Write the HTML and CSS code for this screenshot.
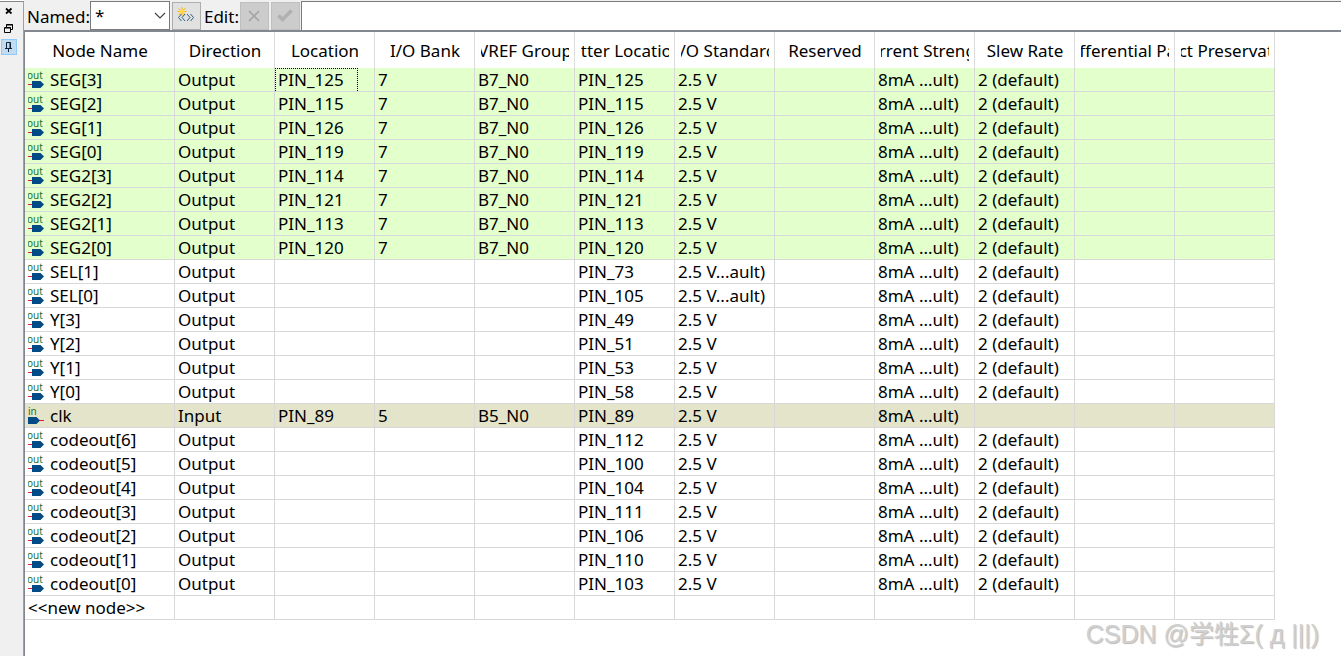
FILE: index.html
```
<!DOCTYPE html>
<html lang="en">
  <head>
    <meta charset="UTF-8" />
    <meta name="viewport" content="width=device-width, initial-scale=1.0" />
    <title>Pin Planner</title>
    <link rel="stylesheet" href="styles.css">
  </head>
  <body>
    <div class="side">
      <button type="button" class="dock" aria-label="Close">
        <svg width="8" height="8" viewBox="0 0 8 8"><path d="M1 1.500 6.500 6.500M6.500 1.500 1 6.500" stroke="#000" stroke-width="1.700" /></svg>
      </button>
      <button type="button" class="dock" aria-label="Float">
        <svg width="10" height="10" viewBox="0 0 10 10" fill="none" stroke="#000"><path d="M2.500 4V.5h6v5H6.500M2 1h7M1 4h6" /><path d="M.5 3.500h6v5h-6z" /></svg>
      </button>
      <button type="button" class="dock pinned" aria-label="Pin">
        <svg width="8" height="10" viewBox="0 0 8 10" fill="none" stroke="#123"><path d="M1.500 6V.5h4V6M5 .5V6M0 6.500h7M3.500 7v3" /></svg>
      </button>
    </div>

    <div class="main">
      <div class="toolbar">
        <label for="named">Named:</label>
        <span class="combo">
          <select id="named">
            <option>*</option>
          </select>
          <svg width="12" height="7" viewBox="0 0 12 7"><path d="M1 1l5 5 5-5" fill="none" stroke="#444" stroke-width="1.200" /></svg>
        </span>
        <button type="button" class="tool" aria-label="Node finder">
          <svg width="18" height="18" viewBox="0 0 18 18" fill="none">
            <path d="M5 0v9M.5 4.500h9M1.500 1.500l7 6.500M8.500 1l-7 7" stroke="#f8b800" />
            <circle cx="5" cy="4.500" r="2.300" fill="#ffd84a" />
            <path d="M4.500 7 1.500 10.500l3 3.500M8 7 5 10.500 8 14M10 7l3 3.500-3 3.500M13.500 7l3 3.500-3 3.500" stroke="#2f5f80" />
          </svg>
        </button>
        <label for="edit">Edit:</label>
        <button type="button" class="tool" aria-label="Cancel" disabled>
          <svg width="12" height="12" viewBox="0 0 12 12"><path d="M1 1l10 10M11 1 1 11" stroke="#a0a0a0" stroke-width="1.500" /></svg>
        </button>
        <button type="button" class="tool" aria-label="Apply" disabled>
          <svg width="16" height="13" viewBox="0 0 16 13"><path d="M1.500 6.500l4 4L14.500 1.500" fill="none" stroke="#b0b0b0" stroke-width="3.500" /></svg>
        </button>
        <input type="text" id="edit" class="edit" />
      </div>

      <div class="view">
        <table>
          <thead>
            <tr>
              <th class="name"><span>Node Name</span></th>
              <th><span>Direction</span></th>
              <th><span>Location</span></th>
              <th><span>I/O Bank</span></th>
              <th><span>VREF Group</span></th>
              <th><span>Fitter Location</span></th>
              <th><span>I/O Standard</span></th>
              <th><span>Reserved</span></th>
              <th><span>Current Strength</span></th>
              <th><span>Slew Rate</span></th>
              <th><span>Differential Pair</span></th>
              <th><span>Strict Preservation</span></th>
            </tr>
          </thead>
          <tbody id="nodes"></tbody>
        </table>
      </div>
    </div>

    <div class="watermark">CSDN @学牲Σ( д |||)</div>

    <script src="script.js"></script>
  </body>
</html>
```
FILE: styles.css
```
* {
  box-sizing: border-box;
  margin: 0;
  padding: 0;
}

body {
  display: flex;
  min-height: 100vh;
  background-color: #fff;
  color: #000;
  font: 17px/24px "Noto Sans", "Noto Sans CJK SC", sans-serif;
}

button,
input,
select {
  font: inherit;
  color: inherit;
}

.side {
  flex: none;
  display: flex;
  flex-direction: column;
  align-items: flex-start;
  gap: 2px;
  width: 24px;
  margin-top: 1px;
  padding: 1px;
  border-top: 1px solid #888;
  border-right: 1px solid #a0a0a0;
  background-color: #f0f0f0;
}

.dock {
  display: flex;
  align-items: center;
  justify-content: center;
  width: 16px;
  height: 16px;
  border: 0;
  background: none;
}

.pinned {
  border: 1px solid #90c8f6;
  background-color: #c0dcf3;
}

.main {
  flex: 1;
  display: flex;
  flex-direction: column;
  min-width: 0;
}

.toolbar {
  display: flex;
  align-items: center;
  gap: 2px;
  height: 30px;
  padding: 1px 0 0 3px;
  background-color: #f0f0f0;
}

.toolbar label {
  margin-right: -2px;
  padding-top: 3px;
}

.tool + label {
  margin: 0 -1px 0 1px;
}

.combo {
  display: flex;
  align-items: center;
  width: 80px;
  height: 29px;
  padding-right: 3px;
  border: 1px solid #7a7a7a;
  background-color: #fff;
}

.combo select {
  flex: 1;
  min-width: 0;
  padding-left: 4px;
  border: 0;
  background: none;
  appearance: none;
}

.tool {
  display: flex;
  align-items: center;
  justify-content: center;
  width: 29px;
  height: 28px;
  border: 1px solid #adadad;
  background-color: #e1e1e1;
}

.tool:disabled {
  border-color: #bfbfbf;
  background-color: #ccc;
}

.edit {
  flex: 1;
  min-width: 0;
  height: 29px;
  margin-left: -1px;
  padding: 0 4px;
  border: 1px solid #7a7a7a;
  border-width: 1px 0 0 1px;
  background-color: #fff;
}

.view {
  flex: 1;
  border-top: 2px solid #828790;
  border-left: 1px solid #828790;
}

table {
  width: 1250px;
  table-layout: fixed;
  border-collapse: separate;
  border-spacing: 0;
}

th {
  width: 100px;
  height: 36px;
  padding: 2px 5px 0 6px;
  border-right: 1px solid #dcdcdc;
  font-weight: normal;
}

.name {
  width: 150px;
}

/* long titles are clipped on both sides */
th span {
  display: flex;
  justify-content: center;
  overflow: hidden;
  white-space: nowrap;
}

td {
  height: 24px;
  padding: 1px 3px 0;
  border-right: 1px solid #d8d8d8;
  border-bottom: 1px solid #d8d8d8;
  line-height: 22px;
  white-space: nowrap;
}

.assigned {
  background-color: #e3ffcb;
}

.input {
  background-color: #e4e4cb;
}

.node {
  display: flex;
  align-items: center;
  gap: 6px;
}

td.current {
  padding: 0;
}

.current span {
  display: block;
  width: 83px;
  height: 23px;
  padding-left: 2px;
  border: 1px dotted #000;
  border-bottom: 0;
}

.pin text {
  font: 10px "Noto Sans", sans-serif;
  fill: #1f6f2a;
}

.watermark {
  position: absolute;
  right: 22px;
  bottom: 6px;
  color: #d0d0d0;
  font: 25px/32px "Liberation Sans", "Noto Sans CJK SC", sans-serif;
  text-shadow: 1px 1px 1px #bbb;
}
```
FILE: script.js
```
// name, direction, location, bank, vref, fitter location, standard
const nodes = [
  ["SEG[3]", "Output", "PIN_125", "7", "B7_N0", "PIN_125", "2.5 V"],
  ["SEG[2]", "Output", "PIN_115", "7", "B7_N0", "PIN_115", "2.5 V"],
  ["SEG[1]", "Output", "PIN_126", "7", "B7_N0", "PIN_126", "2.5 V"],
  ["SEG[0]", "Output", "PIN_119", "7", "B7_N0", "PIN_119", "2.5 V"],
  ["SEG2[3]", "Output", "PIN_114", "7", "B7_N0", "PIN_114", "2.5 V"],
  ["SEG2[2]", "Output", "PIN_121", "7", "B7_N0", "PIN_121", "2.5 V"],
  ["SEG2[1]", "Output", "PIN_113", "7", "B7_N0", "PIN_113", "2.5 V"],
  ["SEG2[0]", "Output", "PIN_120", "7", "B7_N0", "PIN_120", "2.5 V"],
  ["SEL[1]", "Output", "", "", "", "PIN_73", "2.5 V...ault)"],
  ["SEL[0]", "Output", "", "", "", "PIN_105", "2.5 V...ault)"],
  ["Y[3]", "Output", "", "", "", "PIN_49", "2.5 V"],
  ["Y[2]", "Output", "", "", "", "PIN_51", "2.5 V"],
  ["Y[1]", "Output", "", "", "", "PIN_53", "2.5 V"],
  ["Y[0]", "Output", "", "", "", "PIN_58", "2.5 V"],
  ["clk", "Input", "PIN_89", "5", "B5_N0", "PIN_89", "2.5 V"],
  ["codeout[6]", "Output", "", "", "", "PIN_112", "2.5 V"],
  ["codeout[5]", "Output", "", "", "", "PIN_100", "2.5 V"],
  ["codeout[4]", "Output", "", "", "", "PIN_104", "2.5 V"],
  ["codeout[3]", "Output", "", "", "", "PIN_111", "2.5 V"],
  ["codeout[2]", "Output", "", "", "", "PIN_106", "2.5 V"],
  ["codeout[1]", "Output", "", "", "", "PIN_110", "2.5 V"],
  ["codeout[0]", "Output", "", "", "", "PIN_103", "2.5 V"],
];

const outIcon = `<svg class="pin" width="16" height="18" viewBox="0 0 16 18"><text x="-1" y="8">out</text><path d="M0 13.500h4" stroke="#e02030"/><path d="M4 10h8.500L16 13.500 12.500 17H4z" fill="#004a86"/></svg>`;
const inIcon = `<svg class="pin" width="16" height="18" viewBox="0 0 16 18"><text x="0" y="8">in</text><path d="M11 13.500h5" stroke="#e02030"/><path d="M0 10h8.500L12 13.500 8.500 17H0z" fill="#004a86"/></svg>`;

const body = document.querySelector("#nodes");

nodes.forEach((node, i) => {
  const isInput = node[1] === "Input";
  const cells = [...node, "", "8mA ...ult)", isInput ? "" : "2 (default)", "", ""];
  const tr = document.createElement("tr");

  if (isInput) {
    tr.className = "input";
  } else if (node[2]) {
    tr.className = "assigned";
  }

  tr.innerHTML = cells
    .map((text, col) => {
      if (col === 0) {
        return `<td><div class="node">${isInput ? inIcon : outIcon}${text}</div></td>`;
      }
      if (i === 0 && col === 2) {
        return `<td class="current"><span>${text}</span></td>`;
      }
      return `<td>${text}</td>`;
    })
    .join("");
  body.appendChild(tr);
});

// last row is for adding a node
const last = document.createElement("tr");
last.innerHTML = "<td>&lt;&lt;new node&gt;&gt;</td>" + "<td></td>".repeat(11);
body.appendChild(last);
```
